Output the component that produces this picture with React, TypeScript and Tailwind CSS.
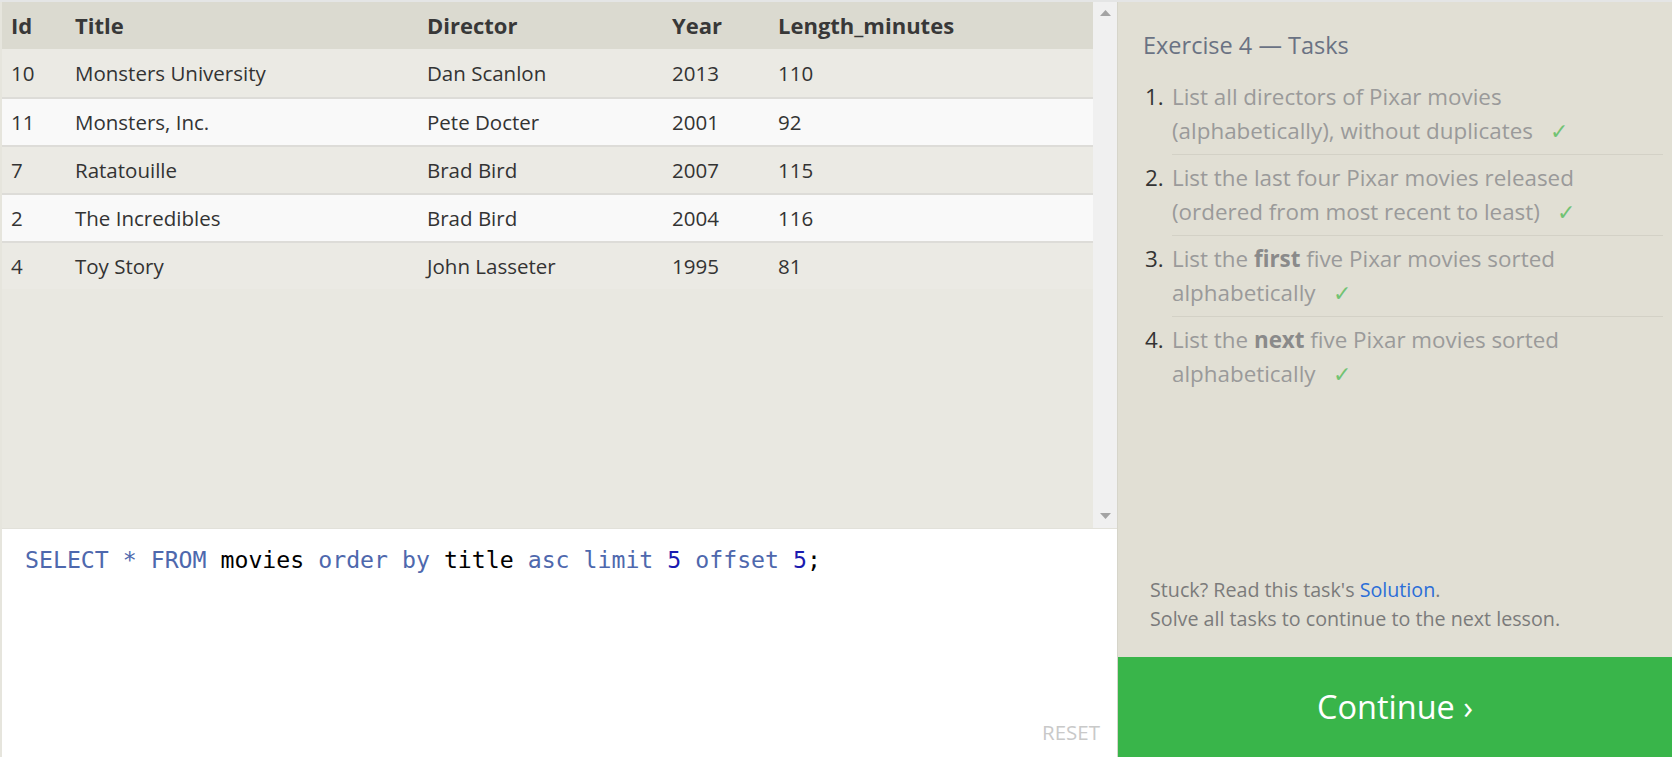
import React from "react";

const rows = [
  { id: "10", title: "Monsters University", director: "Dan Scanlon", year: "2013", len: "110" },
  { id: "11", title: "Monsters, Inc.", director: "Pete Docter", year: "2001", len: "92" },
  { id: "7", title: "Ratatouille", director: "Brad Bird", year: "2007", len: "115" },
  { id: "2", title: "The Incredibles", director: "Brad Bird", year: "2004", len: "116" },
  { id: "4", title: "Toy Story", director: "John Lasseter", year: "1995", len: "81" },
];

function Cells({ r, bold }: { r: { id: string; title: string; director: string; year: string; len: string }; bold?: boolean }) {
  return (
    <>
      <div className={"w-[73px] pl-[9px] " + (bold ? "font-bold" : "")}>{r.id}</div>
      <div className={"w-[352px] " + (bold ? "font-bold" : "")}>{r.title}</div>
      <div className={"w-[245px] " + (bold ? "font-bold" : "")}>{r.director}</div>
      <div className={"w-[106px] " + (bold ? "font-bold" : "")}>{r.year}</div>
      <div className={"flex-1 " + (bold ? "font-bold" : "")}>{r.len}</div>
    </>
  );
}

function Check() {
  return <span className="ml-[17px] text-[#71c373]">✓</span>;
}

export default function App() {
  return (
    <div
      className="flex h-[757px] w-[1672px] overflow-hidden border-t-2 border-[#e4e5e5] bg-white"
      style={{ fontFamily: '"Open Sans", sans-serif' }}
    >
      {/* Left */}
      <div className="flex w-[1117px] flex-col border-l-2 border-[#e6e5dd]">
        <div className="flex h-[527px] border-b border-[#e2e1da] bg-[#e9e8e1]">
          <div className="flex-1 text-[20.5px] text-[#333]">
            <div className="flex h-[47px] items-center bg-[#dbdad0] text-[22px] text-[#383838]">
              <Cells r={{ id: "Id", title: "Title", director: "Director", year: "Year", len: "Length_minutes" }} bold />
            </div>
            {rows.map((r, i) => (
              <div
                key={r.id}
                className={
                  "flex items-center " +
                  (i === 0 ? "h-[48px] " : "h-[48px] border-t-2 border-[#dddcd8] ") +
                  (i % 2 === 1 ? "bg-[#f9f9f9]" : "bg-[#ebeae4]")
                }
              >
                <Cells r={r} />
              </div>
            ))}
          </div>
          <div className="flex w-[24px] flex-col items-center justify-between bg-[#f0f0f0] py-[8px]">
            <svg width="11" height="7" viewBox="0 0 11 7">
              <path d="M5.5 0 L11 6 L0 6 Z" fill="#a3a3a3" />
            </svg>
            <svg width="11" height="7" viewBox="0 0 11 7">
              <path d="M0 0 L11 0 L5.5 6 Z" fill="#a3a3a3" />
            </svg>
          </div>
        </div>
        <div className="flex flex-1 flex-col bg-white">
          <div
            className="flex-1 pl-[23px] pt-[16px] text-[23.2px] leading-[30px]"
            style={{ fontFamily: '"DejaVu Sans Mono", monospace' }}
          >
            <span className="text-[#4e68ad]">SELECT</span>{" "}
            <span className="text-[#4e68ad]">*</span>{" "}
            <span className="text-[#4e68ad]">FROM</span>{" "}
            <span className="text-black">movies</span>{" "}
            <span className="text-[#4e68ad]">order</span>{" "}
            <span className="text-[#4e68ad]">by</span>{" "}
            <span className="text-black">title</span>{" "}
            <span className="text-[#4e68ad]">asc</span>{" "}
            <span className="text-[#4e68ad]">limit</span>{" "}
            <span className="text-[#1a1ab0]">5</span>{" "}
            <span className="text-[#4e68ad]">offset</span>{" "}
            <span className="text-[#1a1ab0]">5</span>
            <span className="text-black">;</span>
          </div>
          <div className="flex justify-end pb-[11px] pr-[17px] text-[20.5px] leading-[28px] text-[#c9c9c9]">RESET</div>
        </div>
      </div>

      {/* Right */}
      <div className="flex flex-1 flex-col border-l border-[#d6d5ca] bg-[#e1dfd4]">
        <div className="flex-1 pl-[25px] pr-[9px] pt-[28px]">
          <div className="text-[23.5px] leading-[30px] text-[#6a7283]">Exercise 4 — Tasks</div>
          <ol className="mt-[14px] text-[22.4px] leading-[34px]">
            {[
              <>List all directors of Pixar movies (alphabetically), without duplicates<Check /></>,
              <>List the last four Pixar movies released (ordered from most recent to least)<Check /></>,
              <>List the <b className="font-bold text-[#8a8a8a]">first</b> five Pixar movies sorted alphabetically<Check /></>,
              <>List the <b className="font-bold text-[#8a8a8a]">next</b> five Pixar movies sorted alphabetically<Check /></>,
            ].map((t, i) => (
              <li key={i} className="flex">
                <div className="w-[29px] shrink-0 pl-[2px] pt-[6px] text-[#333]">{i + 1}.</div>
                <div className={"flex-1 py-[6px] pr-[60px] text-[#9a9a9a] " + (i < 3 ? "border-b border-[#d3d1c6]" : "")}>
                  {t}
                </div>
              </li>
            ))}
          </ol>
        </div>
        <div className="pb-[24px] pl-[32px] text-[19.7px] leading-[29px] text-[#7b7b7b]">
          <div>
            Stuck? Read this task's <span className="text-[#2b6ed8]">Solution</span>.
          </div>
          <div>Solve all tasks to continue to the next lesson.</div>
        </div>
        <div className="flex h-[100px] items-center justify-center bg-[#39b54a] text-[32.5px] text-white">
          Continue ›
        </div>
      </div>
    </div>
  );
}
